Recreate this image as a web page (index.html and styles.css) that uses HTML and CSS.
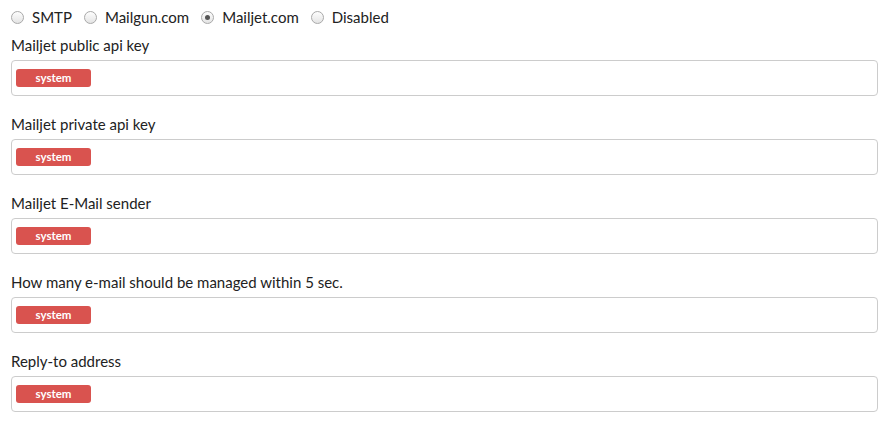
FILE: index.html
```html
<!DOCTYPE html>
<html>
<head>
<meta charset="utf-8">
<link rel="stylesheet" href="styles.css">
</head>
<body>
<div class="form">
  <div class="radios">
    <label class="radio"><span class="dot"></span>SMTP</label>
    <label class="radio"><span class="dot"></span>Mailgun.com</label>
    <label class="radio"><span class="dot checked"></span>Mailjet.com</label>
    <label class="radio"><span class="dot"></span>Disabled</label>
  </div>
  <div class="group">
    <div class="label">Mailjet public api key</div>
    <div class="box"><span class="badge">system</span></div>
  </div>
  <div class="group">
    <div class="label">Mailjet private api key</div>
    <div class="box"><span class="badge">system</span></div>
  </div>
  <div class="group">
    <div class="label">Mailjet E-Mail sender</div>
    <div class="box"><span class="badge">system</span></div>
  </div>
  <div class="group">
    <div class="label">How many e-mail should be managed within 5 sec.</div>
    <div class="box"><span class="badge">system</span></div>
  </div>
  <div class="group">
    <div class="label">Reply-to address</div>
    <div class="box"><span class="badge">system</span></div>
  </div>
</div>
</body>
</html>
```
FILE: styles.css
```css
html, body {
  margin: 0;
  padding: 0;
  background: #fff;
}
body {
  font-family: "Source Sans Pro", Lato, "Liberation Sans", sans-serif;
  font-size: 15px;
  color: #222;
}
.form {
  width: 867px;
  padding: 7px 0 0 11px;
}
.radios {
  display: flex;
  align-items: center;
  height: 20px;
  margin-bottom: 8px;
}
.radio {
  display: flex;
  align-items: center;
  margin-right: 12px;
}
.dot {
  width: 11px;
  height: 11px;
  border: 1px solid #a9a9a9;
  border-radius: 50%;
  background: linear-gradient(#fdfdfd, #e4e4e4);
  margin-right: 8px;
  position: relative;
  box-sizing: content-box;
}
.dot.checked::after {
  content: "";
  position: absolute;
  left: 3px;
  top: 3px;
  width: 5px;
  height: 5px;
  border-radius: 50%;
  background: #555;
}
.group {
  margin-bottom: 18px;
}
.label {
  line-height: 20px;
  height: 20px;
  margin-bottom: 5px;
}
.box {
  height: 36px;
  box-sizing: border-box;
  border: 1px solid #ccc;
  border-radius: 4px;
  padding: 8px 4px;
}
.badge {
  display: block;
  width: 75px;
  height: 18px;
  line-height: 18px;
  background: #d9534f;
  color: #fff;
  border-radius: 3px;
  font-size: 11.5px;
  font-weight: bold;
  text-align: center;
}
```
